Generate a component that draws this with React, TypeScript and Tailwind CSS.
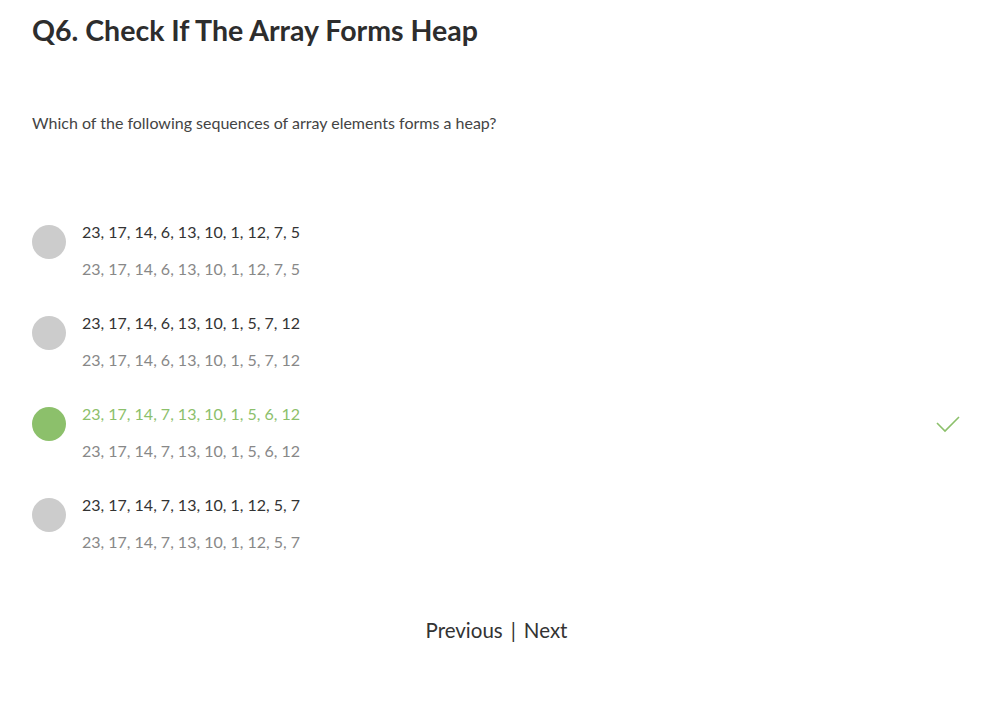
const OPTIONS = [
  { a: "23, 17, 14, 6, 13, 10, 1, 12, 7, 5", ok: false },
  { a: "23, 17, 14, 6, 13, 10, 1, 5, 7, 12", ok: false },
  { a: "23, 17, 14, 7, 13, 10, 1, 5, 6, 12", ok: true },
  { a: "23, 17, 14, 7, 13, 10, 1, 12, 5, 7", ok: false },
];

export default function App() {
  return (
    <div className="min-h-screen bg-white pl-8 pr-[20px] pt-[12px] text-[#333]" style={{ fontFamily: "Lato, 'Noto Sans', sans-serif" }}>
      <h1 className="text-[28.5px] font-bold leading-[36px] text-[#2d2d2d]">Q6. Check If The Array Forms Heap</h1>

      <p className="mt-[65px] text-[16px] leading-[20px] text-[#444]">
        Which of the following sequences of array elements forms a heap?
      </p>

      <div className="mt-[89px] flex flex-col gap-[34px]">
        {OPTIONS.map((o) => (
          <div key={o.a} className="flex items-start">
            <div
              className={`mt-[3px] h-[34px] w-[34px] shrink-0 rounded-full ${o.ok ? "bg-[#8cc06b]" : "bg-[#cccccc]"}`}
            />
            <div className="ml-[16px] flex flex-1 flex-col gap-[17px] text-[16px] leading-[20px]">
              <span className={o.ok ? "text-[#8cc06b]" : "text-[#333]"}>{o.a}</span>
              <span className="text-[#888]">{o.a}</span>
            </div>
            {o.ok && (
              <svg width="26" height="20" viewBox="0 0 26 20" className="mt-[10px]">
                <path d="M2 9 L10 17 L24 3" fill="none" stroke="#8cc06b" strokeWidth="1.6" />
              </svg>
            )}
          </div>
        ))}
      </div>

      <div className="mt-[64px] flex items-center justify-center gap-[8px] text-[20.5px] leading-[28px] text-[#333]">
        <span>Previous</span>
        <span>|</span>
        <span>Next</span>
      </div>
    </div>
  );
}
